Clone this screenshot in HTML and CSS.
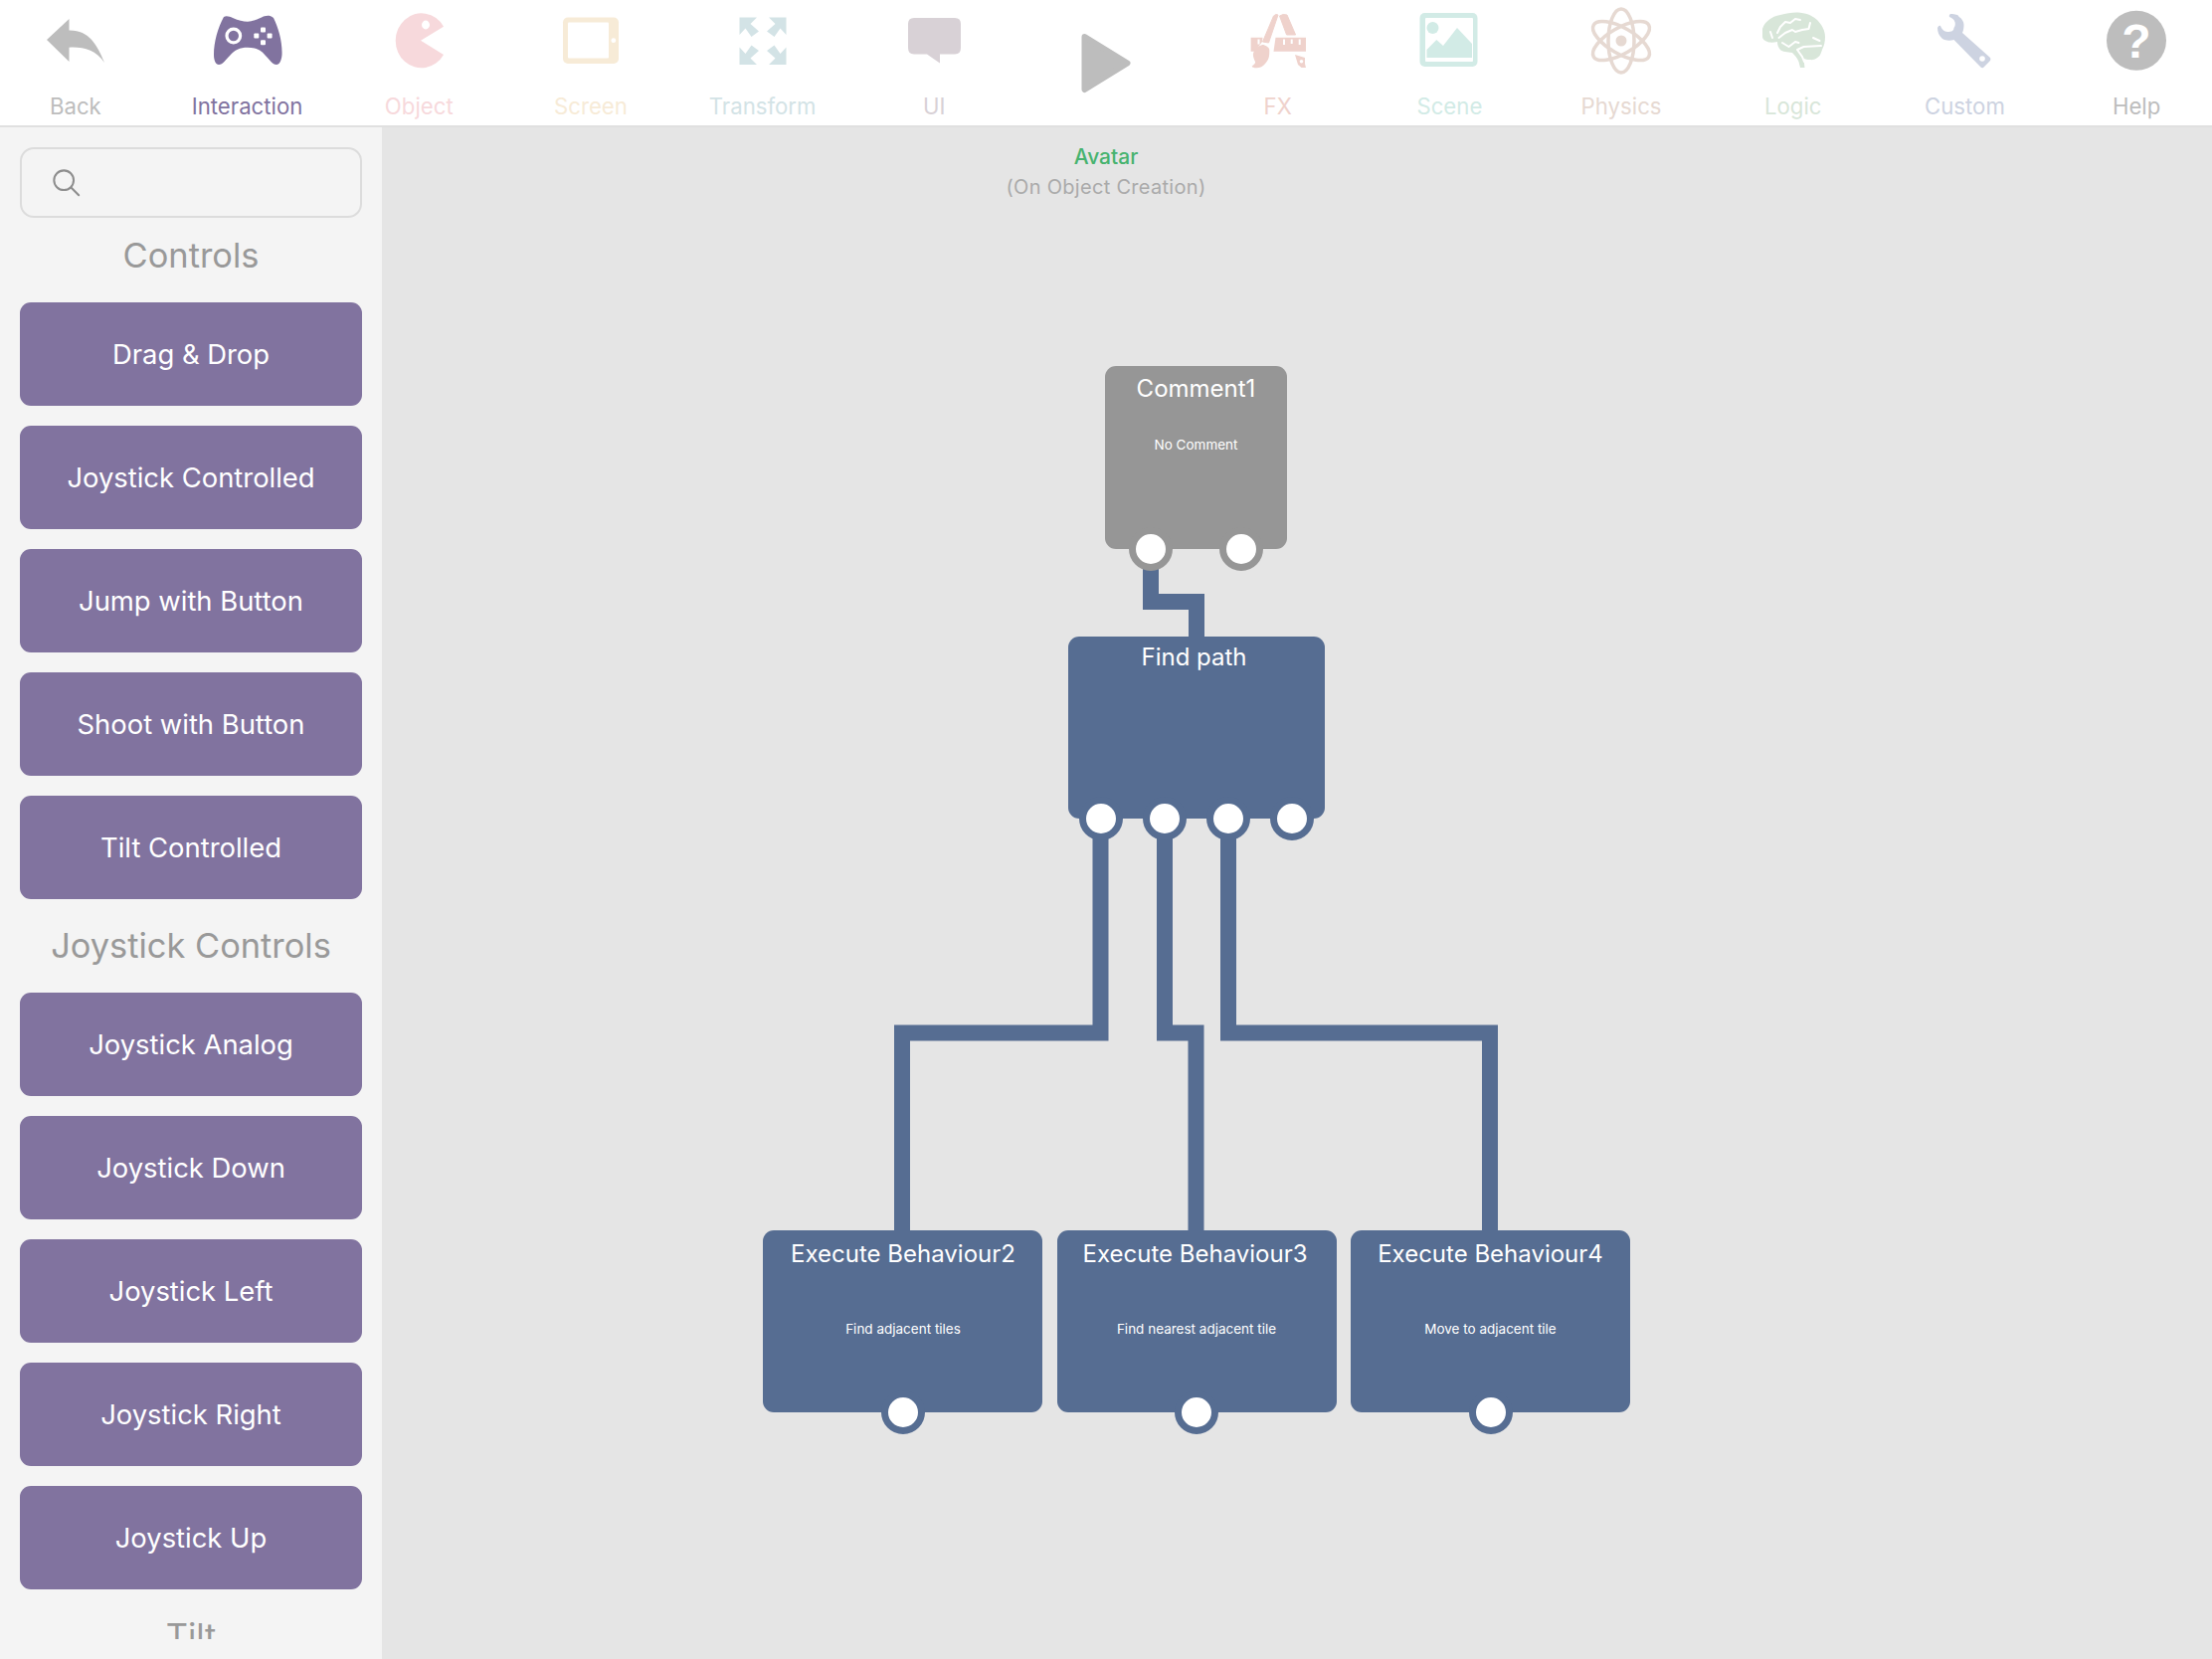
FILE: index.html
```html
<!DOCTYPE html>
<html lang="en">
<head>
<meta charset="utf-8">
<title>Behaviour editor</title>
<link rel="stylesheet" href="styles.css">
</head>
<body>
<header class="toolbar">
  <div class="tool tool-back">
    <svg class="icon" viewBox="-60 0 120 94"><path d="M-29 40 L-6.5 19 V30.5 C13 30 22 45 29 63 C20 50 8 47 -6.5 47.7 V62 Z"/></svg>
    <span class="tool-label">Back</span>
  </div>
  <div class="tool tool-interaction">
    <svg class="icon" viewBox="-60 0 120 94">
      <path d="M-24 17 C-21 15.5 -18 17 -15 18 C-9 20.5 -5 21.7 0 21.7 C5 21.7 9 19.5 14 17.5 C17 16 22 14.5 26 18 C31 28 35 42 34.5 55 C34 61 32 65 29 65 C25 65 22 60 18 56 C13 50 8 47.7 0 47.7 C-8 47.7 -13 50 -18 56 C-22 60 -25 65 -29 65 C-32 65 -34 61 -34 55 C-34 42 -30 28 -24 17Z"/>
      <circle class="cut-line" cx="-14.200" cy="36" r="6.800"/>
      <rect class="cut" x="13" y="27.500" width="5" height="5" rx="1"/>
      <rect class="cut" x="13" y="40.200" width="5" height="5" rx="1"/>
      <rect class="cut" x="6.300" y="33.500" width="5" height="5" rx="1"/>
      <rect class="cut" x="19.600" y="33.500" width="5" height="5" rx="1"/>
    </svg>
    <span class="tool-label">Interaction</span>
  </div>
  <div class="tool tool-object">
    <svg class="icon" viewBox="-60 0 120 94">
      <path d="M25 26.7 A26 27.5 0 1 0 25 55 L2 40.7Z"/>
      <ellipse class="cut" cx="7" cy="25" rx="4" ry="4.4"/>
    </svg>
    <span class="tool-label">Object</span>
  </div>
  <div class="tool tool-screen">
    <svg class="icon" viewBox="-60 0 120 94">
      <rect x="-28" y="17.5" width="56" height="46.5" rx="5"/>
      <rect class="cut" x="-23" y="22.5" width="41" height="36" rx="1"/>
      <circle class="cut" cx="22.8" cy="40.7" r="2.4"/>
    </svg>
    <span class="tool-label">Screen</span>
  </div>
  <div class="tool tool-transform">
    <svg class="icon" viewBox="-60 0 120 94">
      <path d="M-23.5 17.5 H-6 L-12.5 24 L-4 31.5 L-11.5 37 L-17.5 28.5 L-23.5 35Z"/>
      <path transform="scale(-1 1)" d="M-23.5 17.5 H-6 L-12.5 24 L-4 31.5 L-11.5 37 L-17.5 28.5 L-23.5 35Z"/>
      <path transform="translate(0 82.5) scale(1 -1)" d="M-23.5 17.5 H-6 L-12.5 24 L-4 31.5 L-11.5 37 L-17.5 28.5 L-23.5 35Z"/>
      <path transform="translate(0 82.5) scale(-1 -1)" d="M-23.5 17.5 H-6 L-12.5 24 L-4 31.5 L-11.5 37 L-17.5 28.5 L-23.5 35Z"/>
    </svg>
    <span class="tool-label">Transform</span>
  </div>
  <div class="tool tool-ui">
    <svg class="icon" viewBox="-60 0 120 94"><path d="M-20 18 H21 Q27 18 27 24 V48 Q27 54.500 21 54.500 H6 V63.500 L-7 54.500 H-20 Q-26 54.500 -26 48 V24 Q-26 18 -20 18Z"/></svg>
    <span class="tool-label">UI</span>
  </div>
  <div class="tool tool-play">
    <svg class="icon" viewBox="-60 0 120 94"><path class="round" d="M-21.500 37 L21.500 63.500 L-21.500 90Z"/></svg>
  </div>
  <div class="tool tool-fx">
    <svg class="icon" viewBox="-60 0 120 94">
      <path class="soft" d="M-4.500 16 Q-2 13.500 0 15 L-9.500 43 L-15.500 42Z"/>
      <path class="soft" d="M1.500 16 Q5 13.500 9 15 L17.600 35 L8.600 35Z"/>
      <path d="M-2.500 37.700 H28 V51.700 H-4.500Z"/>
      <path d="M-27.400 37.700 H-15.500 L-16 42 L-22 50 L-24 51.700 H-27.400Z"/>
      <path class="cut" d="M5 39.500 h2 v5.500 h-2z M12.700 39.500 h2 v4.500 h-2z M20.700 39.500 h2 v5.500 h-2z M-20.500 39.500 h2 v5 h-2z"/>
      <path d="M-14.750 45 C-11.500 46 -8.750 48 -8.750 50 C-8.500 55 -9 59 -11.400 62 C-14 65.500 -17 68 -19.750 68 C-23 68.500 -25.500 68 -26.400 66.700 C-24 65 -22.500 63.500 -23 62 C-25 58 -25.500 55 -24.750 53 C-24 50 -22 48 -19.750 46.700 C-18 45.500 -16 45 -14.750 45Z"/>
      <path d="M17 55 L27 58 V64 L28 68 H23.500 L20 65 L18.500 60Z"/>
      <circle class="cut" cx="23.500" cy="61.700" r="1.800"/>
    </svg>
    <span class="tool-label">FX</span>
  </div>
  <div class="tool tool-scene">
    <svg class="icon" viewBox="-60 0 120 94">
      <rect x="-29.500" y="13" width="58" height="54" rx="5"/>
      <rect class="cut" x="-24" y="18" width="48" height="44" rx="1"/>
      <circle cx="-16.500" cy="28" r="6"/>
      <path d="M-22.500 58 V50 L-12.700 40 L-6 46 L8 28 L23 44 V58Z"/>
    </svg>
    <span class="tool-label">Scene</span>
  </div>
  <div class="tool tool-physics">
    <svg class="icon" viewBox="-60 0 120 94">
      <g class="orbit">
        <ellipse cx="0" cy="41" rx="13" ry="32"/>
        <ellipse cx="0" cy="41" rx="13" ry="32" transform="rotate(60 0 41)"/>
        <ellipse cx="0" cy="41" rx="13" ry="32" transform="rotate(-60 0 41)"/>
      </g>
      <circle cx="0" cy="41" r="5.500"/>
    </svg>
    <span class="tool-label">Physics</span>
  </div>
  <div class="tool tool-logic">
    <svg class="icon" viewBox="-60 0 120 94">
      <path d="M-31 29 C-29 22 -21 16 -13 15 C-6 13 1 12 7 12.700 C15 13.500 21 17 24 20 C29 25 32 31 32 37 C32 42 31 46 29 50 C28 53 27 56 25.500 57 C22 60 19 60.500 17 60 C14 60 12 59.500 10.500 59 L11.500 68 H7 L5.500 62 C4 58 1 55 -1 53 C-6 52.500 -11 52 -13 50 C-15 48 -16 45 -16 42 C-20 43 -24 43 -26 42 C-29 41 -31 39 -31 37Z"/>
      <path class="squiggle" d="M-16 33 L-13 27 L-8 22 L-3 23 L2 19 L7 20 M-14.500 38 L-8 33 L-1 30 L2 32 L9 30 L15.500 29 L17 23 M-11 43 L-4.500 47 L2 42 L5.500 43 M-23 32 L-21 38 M20 38 L26.500 41 M28 46 L10.500 47 L4 50 L9 57 L11 62"/>
    </svg>
    <span class="tool-label">Logic</span>
  </div>
  <div class="tool tool-custom">
    <svg class="icon" viewBox="-60 0 120 94">
      <path d="M-13.900 14 C-9 14 -6 15 -5.500 16.700 C-2 19 -0.500 22 -0.500 25 C-0.500 28 -1 31 -2 33 L26 58 C27 60 26 61 25 62 L20 67 C19 68.500 17.500 68.500 16.500 67.500 L-10.500 40 C-14 41 -19 41 -22 39 C-25.500 36 -27 32 -27 28 C-26 26 -25 25.500 -24 26 C-23 29 -20 32 -17 32 C-13 32 -10.500 31 -10.500 28 C-9 26 -9 24 -9.500 22 C-10.500 19 -13 18 -15 17 C-15.500 15.500 -15 14.500 -13.900 14Z"/>
      <circle class="cut" cx="18" cy="59" r="2.800"/>
    </svg>
    <span class="tool-label">Custom</span>
  </div>
  <div class="tool tool-help">
    <svg class="icon" viewBox="-60 0 120 94">
      <circle cx="0" cy="40.700" r="30"/>
      <text class="help-mark" x="0" y="58">?</text>
    </svg>
    <span class="tool-label">Help</span>
  </div>
</header>

<main class="workspace">
  <aside class="sidebar">
    <div class="search">
      <svg class="search-icon" viewBox="0 0 32 32"><circle cx="13" cy="13" r="10.500"/><path d="M21 21 L29 29"/></svg>
    </div>
    <div class="palette">
      <h2 class="palette-heading">Controls</h2>
      <button class="palette-btn">Drag &amp; Drop</button>
      <button class="palette-btn">Joystick Controlled</button>
      <button class="palette-btn">Jump with Button</button>
      <button class="palette-btn">Shoot with Button</button>
      <button class="palette-btn">Tilt Controlled</button>
      <h2 class="palette-heading">Joystick Controls</h2>
      <button class="palette-btn">Joystick Analog</button>
      <button class="palette-btn">Joystick Down</button>
      <button class="palette-btn">Joystick Left</button>
      <button class="palette-btn">Joystick Right</button>
      <button class="palette-btn">Joystick Up</button>
      <h2 class="palette-heading">Tilt</h2>
    </div>
  </aside>

  <section class="canvas">
    <div class="caption">
      <div class="caption-title">Avatar</div>
      <div class="caption-sub">(On Object Creation)</div>
    </div>

    <svg class="wires" viewBox="384 128 1840 1540">
      <path d="M1157 570 V605 H1203 V640"/>
      <path d="M1106.500 840 V1038.500 H907 V1238"/>
      <path d="M1171 840 V1038.500 H1202.500 V1238"/>
      <path d="M1235 840 V1038.500 H1498 V1238"/>
    </svg>

    <div class="node node-grey node-comment">
      <div class="node-title">Comment1</div>
      <div class="node-text">No Comment</div>
      <div class="ports ports-wide"><span class="port"></span><span class="port"></span></div>
    </div>

    <div class="node node-blue node-find">
      <div class="node-title">Find path</div>
      <div class="ports ports-four"><span class="port"></span><span class="port"></span><span class="port"></span><span class="port"></span></div>
    </div>

    <div class="node node-blue node-exec node-exec-2">
      <div class="node-title">Execute Behaviour2</div>
      <div class="node-text">Find adjacent tiles</div>
      <div class="ports"><span class="port"></span></div>
    </div>
    <div class="node node-blue node-exec node-exec-3">
      <div class="node-title">Execute Behaviour3</div>
      <div class="node-text">Find nearest adjacent tile</div>
      <div class="ports"><span class="port"></span></div>
    </div>
    <div class="node node-blue node-exec node-exec-4">
      <div class="node-title">Execute Behaviour4</div>
      <div class="node-text">Move to adjacent tile</div>
      <div class="ports"><span class="port"></span></div>
    </div>
  </section>
</main>
</body>
</html>
```

FILE: styles.css
```css
* { box-sizing: border-box; }

html, body {
  margin: 0;
  height: 100%;
  overflow: hidden;
}

body {
  display: flex;
  flex-direction: column;
  font-family: Inter, "Liberation Sans", sans-serif;
  background: #e5e5e5;
}

/* toolbar */
.toolbar {
  flex: none;
  height: 128px;
  display: grid;
  grid-template-columns: repeat(13, 172.7px);
  justify-content: center;
  background: #fff;
  border-bottom: 2px solid #e0e0e0;
}

.tool {
  display: flex;
  flex-direction: column;
  align-items: center;
  color: #bdbdbd;
}

.icon {
  flex: none;
  width: 120px;
  height: 94px;
  fill: currentColor;
}

.cut { fill: #fff; }
.cut-line { fill: none; stroke: #fff; stroke-width: 3.2; }
.round { stroke: currentColor; stroke-width: 6; stroke-linejoin: round; }
.soft { stroke: currentColor; stroke-width: 1; stroke-linejoin: round; }
.orbit { fill: none; stroke: currentColor; stroke-width: 3.5; }
.squiggle { fill: none; stroke: #fff; stroke-width: 2; stroke-linejoin: round; stroke-linecap: round; }

.help-mark {
  fill: #fff;
  font-family: "Liberation Sans", sans-serif;
  font-size: 48px;
  font-weight: 700;
  text-anchor: middle;
}

.tool-label {
  font-size: 22.2px;
  line-height: 25px;
}

.tool-interaction { color: #81739f; }
.tool-object { color: #f7d9dc; }
.tool-screen { color: #f7ebd7; }
.tool-transform { color: #d3e3e6; }
.tool-ui { color: #d8d1d6; }
.tool-fx { color: #efd2cc; }
.tool-scene { color: #d2ebe6; }
.tool-physics { color: #e6d9d2; }
.tool-logic { color: #d8e6d9; }
.tool-custom { color: #cdd3e1; }

/* workspace */
.workspace {
  flex: 1;
  min-height: 0;
  display: flex;
}

.sidebar {
  flex: none;
  width: 384px;
  display: flex;
  flex-direction: column;
  padding: 20px 20px 20px;
  background: #f4f4f4;
}

.search {
  flex: none;
  height: 71px;
  display: flex;
  align-items: center;
  padding-left: 30px;
  border: 2px solid #dcdcdc;
  border-radius: 14px;
}

.search-icon {
  width: 30px;
  height: 30px;
  fill: none;
  stroke: #8e8e8e;
  stroke-width: 2.200;
  stroke-linecap: round;
}

.palette {
  flex: 1;
  min-height: 0;
  margin-top: 11px;
  overflow: hidden;
  display: flex;
  flex-direction: column;
  gap: 20px;
}

.palette-heading {
  flex: none;
  margin: 0;
  font-size: 34.4px;
  font-weight: 400;
  line-height: 54px;
  text-align: center;
  color: #999;
}

.palette-btn {
  flex: none;
  height: 104px;
  padding: 0;
  border: 0;
  border-radius: 11px;
  font: inherit;
  font-size: 27.4px;
  color: #fff;
  background: #81739f;
}

/* canvas */
.canvas {
  position: relative;
  flex: 1;
  overflow: hidden;
}

.caption {
  position: absolute;
  top: 15px;
  left: 578px;
  width: 300px;
  text-align: center;
  font-size: 20px;
  line-height: 30px;
}

.caption-title { font-size: 21px; font-weight: 500; color: #47b36f; }
.caption-sub { color: #aaa; letter-spacing: 0.3px; }

.wires {
  position: absolute;
  inset: 0;
  width: 100%;
  height: 100%;
  fill: none;
  stroke: #566d92;
  stroke-width: 16;
}

.node {
  position: absolute;
  border-radius: 11px;
  text-align: center;
  color: #fff;
}

.node-grey { background: #969696; --ring: #969696; }
.node-blue { background: #566d92; --ring: #566d92; }

.node-title {
  font-size: 24px;
  line-height: 30px;
}

.node-text {
  font-size: 13.5px;
  line-height: 16px;
}

.node-comment {
  left: 727px;
  top: 240px;
  width: 183px;
  height: 184px;
  padding-top: 8px;
}
.node-comment .node-text { margin-top: 33px; }

.node-find {
  left: 690px;
  top: 512px;
  width: 258px;
  height: 183px;
  padding-top: 6px;
}
.node-find .node-title { padding-right: 5px; }

.node-exec {
  top: 1109px;
  width: 281px;
  height: 183px;
  padding-top: 9px;
}
.node-exec .node-text { margin-top: 52px; }
.node-exec-2 { left: 383px; padding-left: 1px; }
.node-exec-3 { left: 678.5px; }
.node-exec-3 .node-title { padding-right: 3px; }
.node-exec-4 { left: 974px; }

.ports {
  position: absolute;
  left: 0;
  right: 0;
  bottom: -22px;
  display: flex;
  justify-content: center;
}
.ports-wide { gap: 47px; }
.ports-four { gap: 20px; }

.port {
  flex: none;
  width: 44px;
  height: 44px;
  border: 7px solid var(--ring);
  border-radius: 50%;
  background: #fff;
}
```
